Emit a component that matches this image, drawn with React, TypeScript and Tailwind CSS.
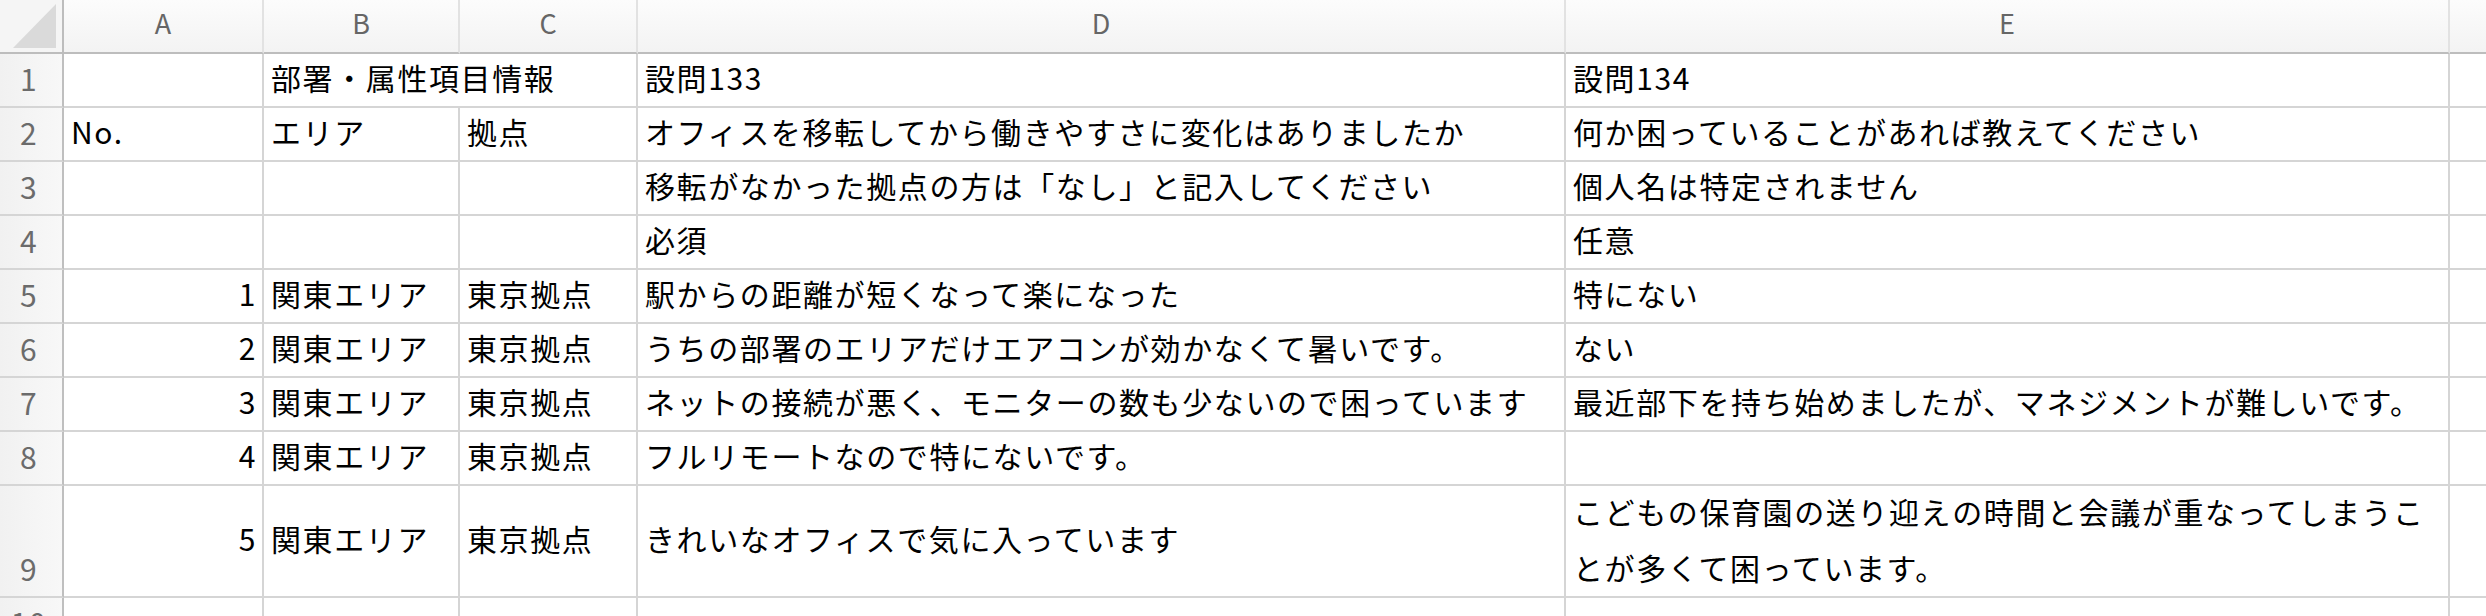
import React from 'react'

// column widths incl. the 2px right grid line
const COLS = [
  { key: 'A', w: 'w-[200px]' },
  { key: 'B', w: 'w-[196px]' },
  { key: 'C', w: 'w-[178px]' },
  { key: 'D', w: 'w-[928px]' },
  { key: 'E', w: 'w-[884px]' },
]

type Row = {
  n: number
  tall?: boolean
  cells: string[]
}

const ROWS: Row[] = [
  { n: 2, cells: ['No.', 'エリア', '拠点', 'オフィスを移転してから働きやすさに変化はありましたか', '何か困っていることがあれば教えてください'] },
  { n: 3, cells: ['', '', '', '移転がなかった拠点の方は「なし」と記入してください', '個人名は特定されません'] },
  { n: 4, cells: ['', '', '', '必須', '任意'] },
  { n: 5, cells: ['1', '関東エリア', '東京拠点', '駅からの距離が短くなって楽になった', '特にない'] },
  { n: 6, cells: ['2', '関東エリア', '東京拠点', 'うちの部署のエリアだけエアコンが効かなくて暑いです。', 'ない'] },
  { n: 7, cells: ['3', '関東エリア', '東京拠点', 'ネットの接続が悪く、モニターの数も少ないので困っています', '最近部下を持ち始めましたが、マネジメントが難しいです。'] },
  { n: 8, cells: ['4', '関東エリア', '東京拠点', 'フルリモートなので特にないです。', ''] },
  { n: 9, tall: true, cells: ['5', '関東エリア', '東京拠点', 'きれいなオフィスで気に入っています', ''] },
]

const cellBase =
  'shrink-0 flex items-center pb-[5px] px-[7px] whitespace-nowrap overflow-visible border-r-2 border-b-2 border-[#d5d5d5]'

function RowHead({ n }: { n: number }) {
  return (
    <div className="w-[64px] shrink-0 flex items-end justify-center pr-[4px] pb-[2px] border-r-2 border-r-[#bfbfbf] border-b-2 border-b-[#d5d5d5] bg-linear-to-r from-[#f1f1f1] to-[#f8f8f8] text-[#6b6b6b] text-[30px] leading-[52px]">
      {n}
    </div>
  )
}

export default function App() {
  return (
    <div className="w-[2486px] h-[616px] overflow-hidden bg-white text-black font-['Noto_Sans_CJK_JP','Noto_Sans',sans-serif] text-[30px] tracking-[1.6px]">
      {/* column header */}
      <div className="flex h-[54px]">
        <div className="w-[64px] shrink-0 border-r-2 border-b-2 border-[#bdbdbd] bg-[#f5f5f5] flex items-end justify-end pr-[5px] pb-[4px]">
          <svg width="44" height="44" viewBox="0 0 44 44">
            <polygon points="43,0 43,44 0,44" fill="#dadada" />
          </svg>
        </div>
        {COLS.map(c => (
          <div
            key={c.key}
            className={`${c.w} shrink-0 flex items-center justify-center pb-[6px] border-r-2 border-r-[#e2e2e2] border-b-2 border-b-[#bdbdbd] bg-linear-to-b from-[#fcfcfc] to-[#f3f3f3] text-[#666] text-[27px] tracking-normal`}
          >
            {c.key}
          </div>
        ))}
        <div className="flex-1 border-b-2 border-b-[#bdbdbd] bg-linear-to-b from-[#fcfcfc] to-[#f3f3f3]" />
      </div>

      {/* row 1: B text runs over C, no grid line between */}
      <div className="flex h-[54px]">
        <RowHead n={1} />
        <div className={`${cellBase} w-[200px]`} />
        <div className={`${cellBase} w-[374px]`}>部署・属性項目情報</div>
        <div className={`${cellBase} w-[928px]`}>設問133</div>
        <div className={`${cellBase} w-[884px]`}>設問134</div>
        <div className="flex-1 border-b-2 border-[#d5d5d5]" />
      </div>

      {ROWS.map(r => (
        <div key={r.n} className={r.tall ? 'flex h-[112px]' : 'flex h-[54px]'}>
          <RowHead n={r.n} />
          {COLS.map((c, i) => {
            const text = r.cells[i]
            const numeric = /^\d+$/.test(text)
            if (r.tall && c.key === 'E') {
              return (
                <div key={c.key} className={`${c.w} shrink-0 flex flex-col justify-center pb-[5px] px-[7px] whitespace-nowrap border-r-2 border-b-2 border-[#d5d5d5] leading-[56px]`}>
                  <span>こどもの保育園の送り迎えの時間と会議が重なってしまうこ</span>
                  <span>とが多くて困っています。</span>
                </div>
              )
            }
            return (
              <div key={c.key} className={`${cellBase} ${c.w} ${numeric ? 'justify-end pr-[5px]' : ''}`}>
                {text}
              </div>
            )
          })}
          <div className="flex-1 border-b-2 border-[#d5d5d5]" />
        </div>
      ))}

      {/* row 10, cut off by the window */}
      <div className="flex h-[54px]">
        <div className="w-[64px] shrink-0 flex items-start justify-center pr-[4px] pt-[4px] border-r-2 border-r-[#bfbfbf] bg-linear-to-r from-[#f1f1f1] to-[#f8f8f8] text-[#6b6b6b] text-[30px] leading-[40px]">
          10
        </div>
        {COLS.map(c => (
          <div key={c.key} className={`${c.w} shrink-0 border-r-2 border-[#d5d5d5]`} />
        ))}
        <div className="flex-1" />
      </div>
    </div>
  )
}
